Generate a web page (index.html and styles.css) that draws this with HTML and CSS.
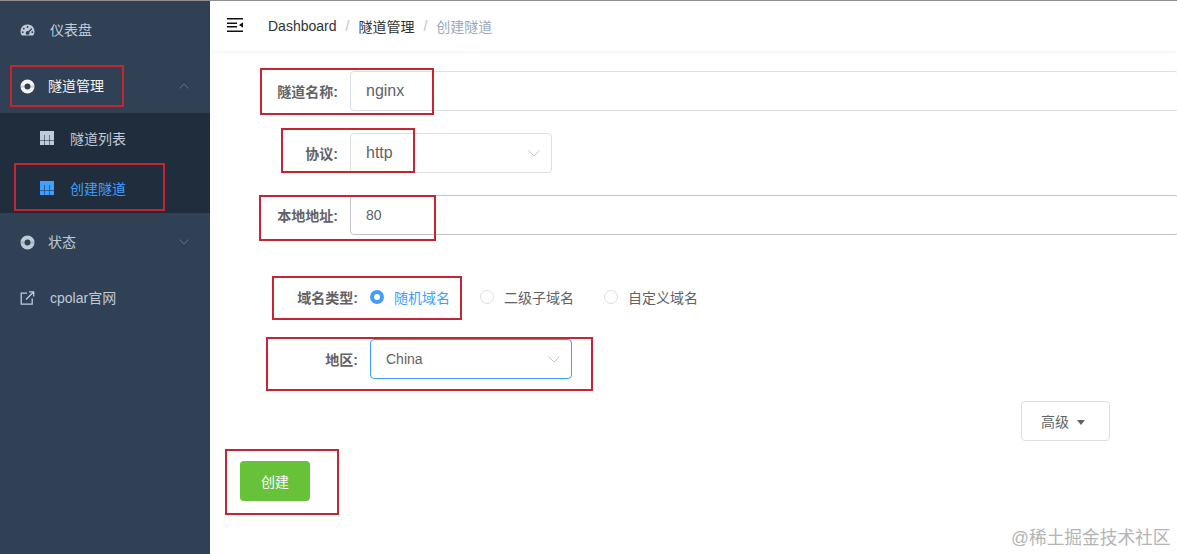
FILE: index.html
```html
<!DOCTYPE html>
<html lang="zh-CN">
<head>
<meta charset="utf-8">
<title>创建隧道</title>
<link rel="stylesheet" href="styles.css">
</head>
<body>
<div class="page">
  <aside class="sidebar">
    <a class="menu-item">
      <svg class="icon icon-gauge" viewBox="0 0 16 14"><path fill="currentColor" fill-rule="evenodd" d="M8 .5a7.500 7.500 0 0 1 6.600 11.100c-.3.600-.8.900-1.400.900H2.800c-.6 0-1.100-.3-1.400-.9A7.500 7.500 0 0 1 8 .5zM8 2.200a1 1 0 1 0 0 2 1 1 0 0 0 0-2zM4 4a1 1 0 1 0 0 2 1 1 0 0 0 0-2zm8.200.3L8.900 7.700a2 2 0 1 0 1.100 1.100l3.200-3.500zM2.800 7.800a1 1 0 1 0 0 2 1 1 0 0 0 0-2zm10.400 0a1 1 0 1 0 0 2 1 1 0 0 0 0-2z"/></svg>
      <span class="menu-text">仪表盘</span>
    </a>
    <a class="menu-item menu-item-open">
      <svg class="icon icon-ring" viewBox="0 0 16 16"><path fill="currentColor" fill-rule="evenodd" d="M8 .5a7.500 7.500 0 1 1 0 15 7.500 7.500 0 0 1 0-15zM8 4.800a3.200 3.200 0 1 0 0 6.400 3.200 3.200 0 0 0 0-6.400z"/><path fill="#304156" opacity=".18" d="M0 6.800h5v2.400H0zM11 6.800h5v2.400h-5z"/></svg>
      <span class="menu-text">隧道管理</span>
      <svg class="chevron" viewBox="0 0 10 6"><path d="M.5 5.500 5 1l4.500 4.500" fill="none" stroke="currentColor"/></svg>
    </a>
    <div class="submenu">
      <a class="sub-item">
        <svg class="grid" viewBox="0 0 14 14"><path fill="currentColor" d="M0 0h14v14H0z"/><path class="grid-lines" d="M0 9.500h14M4.500 4v10M9.500 4v10"/></svg>
        <span>隧道列表</span>
      </a>
      <a class="sub-item sub-item-active">
        <svg class="grid" viewBox="0 0 14 14"><path fill="currentColor" d="M0 0h14v14H0z"/><path class="grid-lines" d="M0 9.500h14M4.500 4v10M9.500 4v10"/></svg>
        <span>创建隧道</span>
      </a>
    </div>
    <a class="menu-item menu-item-status">
      <svg class="icon icon-ring" viewBox="0 0 16 16"><path fill="currentColor" fill-rule="evenodd" d="M8 .5a7.500 7.500 0 1 1 0 15 7.500 7.500 0 0 1 0-15zM8 4.800a3.200 3.200 0 1 0 0 6.400 3.200 3.200 0 0 0 0-6.400z"/><path fill="#304156" opacity=".18" d="M0 6.800h5v2.400H0zM11 6.800h5v2.400h-5z"/></svg>
      <span class="menu-text">状态</span>
      <svg class="chevron" viewBox="0 0 10 6"><path d="M.5.500 5 5 9.500.5" fill="none" stroke="currentColor"/></svg>
    </a>
    <a class="menu-item">
      <svg class="icon icon-link" viewBox="0 0 14 14"><path fill="none" stroke="currentColor" stroke-width="1.300" d="M6.500 2.200H.7v11h11V7.500M5.500 8.500 13 1M8.500.8h4.700v4.700"/></svg>
      <span class="menu-text">cpolar官网</span>
    </a>
  </aside>

  <div class="content">
    <header class="navbar">
      <svg class="hamburger" viewBox="0 0 16 14"><path fill="#111" d="M0 0h16v1.500H0zM0 4.500h10V6H0zM0 8h10v1.500H0zM0 12.500h16V14H0zM16 4.200v5.600L12 7z"/></svg>
      <nav class="crumbs">
        <span class="crumb">Dashboard</span><span class="sep">/</span><span class="crumb">隧道管理</span><span class="sep">/</span><span class="crumb crumb-current">创建隧道</span>
      </nav>
    </header>

    <main class="form">
      <div class="row">
        <label class="label">隧道名称:</label>
        <input class="input input-large" value="nginx">
      </div>
      <div class="row">
        <label class="label">协议:</label>
        <div class="select select-large"><span>http</span><svg class="caret" viewBox="0 0 12 7"><path d="M.5.500 6 6 11.500.5" fill="none" stroke="currentColor"/></svg></div>
      </div>
      <div class="row">
        <label class="label">本地地址:</label>
        <input class="input input-dark" value="80">
      </div>
      <div class="row row-radio">
        <label class="label label-wide">域名类型:</label>
        <div class="radios">
          <span class="radio radio-on"><i class="dot"></i>随机域名</span>
          <span class="radio"><i class="dot"></i>二级子域名</span>
          <span class="radio"><i class="dot"></i>自定义域名</span>
        </div>
      </div>
      <div class="row">
        <label class="label label-wide">地区:</label>
        <div class="select select-focus"><span>China</span><svg class="caret" viewBox="0 0 12 7"><path d="M.5.500 6 6 11.500.5" fill="none" stroke="currentColor"/></svg></div>
      </div>
      <div class="row-advanced">
        <button class="btn-advanced">高级<i class="tri"></i></button>
      </div>
      <button class="btn-create">创建</button>
    </main>
  </div>

  <div class="mark mark-a"></div>
  <div class="mark mark-b"></div>
  <div class="mark mark-c"></div>
  <div class="mark mark-d"></div>
  <div class="mark mark-e"></div>
  <div class="mark mark-f"></div>
  <div class="mark mark-g"></div>
  <div class="mark mark-h"></div>
  <div class="watermark">@稀土掘金技术社区</div>
</div>
</body>
</html>
```

FILE: styles.css
```css
* { box-sizing: border-box; }
html, body { margin: 0; height: 100%; overflow: hidden; background: #fff; }
body, input, button {
  font-family: "Liberation Sans", "Noto Sans CJK SC", sans-serif;
}
.page {
  position: relative;
  display: flex;
  width: 1177px;
  height: 554px;
  overflow: hidden;
  border-top: 1px solid #8f8f8f;
}
.sidebar {
  flex: 0 0 210px;
  padding-top: 1px;
  background: #304156;
  color: #bfcbd9;
  font-size: 14px;
}
.menu-item {
  display: flex;
  align-items: center;
  height: 56px;
  padding-left: 20px;
  position: relative;
}
.menu-item-open { color: #f4f6f8; }
.icon { flex: none; width: 15px; height: 15px; margin-right: 15px; }
.icon-ring { margin-right: 13px; }
.icon-gauge { height: 13px; }
.icon-link { height: 14px; }
.menu-text { line-height: 20px; }
.chevron {
  position: absolute;
  right: 21px;
  top: 25px;
  width: 10px;
  height: 6px;
  color: #5f7083;
}
.submenu { background: #1f2d3d; height: 100px; margin-top: -1px; margin-bottom: 1px; }
.sub-item {
  display: flex;
  align-items: center;
  height: 50px;
  padding-left: 40px;
}
.sub-item-active { color: #409eff; }
.grid { flex: none; width: 14px; height: 14px; margin-right: 16px; }
.grid-lines { fill: none; stroke: #1f2d3d; stroke-width: 1; opacity: .55; }
.content { flex: 1; min-width: 0; }
.navbar {
  display: flex;
  align-items: center;
  height: 50px;
  padding-left: 17px;
  box-shadow: 0 1px 4px rgba(0, 21, 41, .06);
}
.hamburger { width: 16px; height: 14px; margin-right: 25px; margin-top: -3px; }
.crumbs { font-size: 14px; color: #303133; display: flex; align-items: center; }
.sep { color: #c0c4cc; margin: 0 9px; }
.crumb-current { color: #97a8be; }
.form { padding: 20px 0 0 30px; }
.row { display: flex; align-items: center; height: 40px; margin-bottom: 22px; margin-right: -2px; }
.row-radio { margin-top: 42px; }
.label {
  flex: 0 0 100px;
  margin-left: 10px;
  padding-right: 12px;
  text-align: right;
  color: #606266;
  font-size: 14px;
  font-weight: 700;
}
.form .label-wide { flex-basis: 120px; }
.input {
  flex: 1;
  min-width: 0;
  height: 40px;
  padding: 0 15px;
  border: 1px solid #dcdfe6;
  border-radius: 4px;
  color: #606266;
  font-size: 14px;
  outline: none;
}
.input-large { font-size: 16px; }
.input-dark { border-color: #c0c4cc; }
.select {
  position: relative;
  display: flex;
  align-items: center;
  width: 202px;
  height: 40px;
  padding: 0 15px;
  border: 1px solid #dcdfe6;
  border-radius: 4px;
  color: #606266;
  font-size: 14px;
}
.select-large { font-size: 16px; }
.select-focus { border-color: #409eff; }
.caret { position: absolute; right: 11px; top: 16px; width: 12px; height: 7px; color: #c0c4cc; }
.radios { display: flex; font-size: 14px; color: #606266; }
.radio { display: flex; align-items: center; margin-right: 30px; }
.dot {
  width: 14px;
  height: 14px;
  margin-right: 10px;
  border: 1px solid #dcdfe6;
  border-radius: 50%;
  background: #fff;
}
.radio-on { color: #409eff; }
.radio-on .dot { border: 4px solid #409eff; }
.row-advanced { display: flex; justify-content: flex-end; padding-right: 67px; margin-bottom: 20px; }
.btn-advanced {
  display: flex;
  align-items: center;
  justify-content: center;
  width: 89px;
  height: 40px;
  background: #fff;
  border: 1px solid #dcdfe6;
  border-radius: 4px;
  color: #606266;
  font-size: 14px;
}
.tri {
  width: 0;
  height: 0;
  margin-left: 8px;
  margin-right: 5px;
  margin-top: 2px;
  border: 4px solid transparent;
  border-top: 5px solid #606266;
  border-bottom: 0;
}
.btn-create {
  display: block;
  width: 70px;
  height: 40px;
  background: #67c23a;
  border: 0;
  border-radius: 4px;
  color: #fff;
  font-size: 14px;
}
.mark { position: absolute; border: 2px solid #c5252f; pointer-events: none; }
.mark-a { left: 10px; top: 64px; width: 114px; height: 42px; }
.mark-b { left: 14px; top: 162px; width: 151px; height: 48px; }
.mark-c { left: 260px; top: 67px; width: 174px; height: 47px; }
.mark-d { left: 281px; top: 127px; width: 134px; height: 45px; }
.mark-e { left: 259px; top: 194px; width: 177px; height: 46px; }
.mark-f { left: 272px; top: 275px; width: 190px; height: 44px; }
.mark-g { left: 266px; top: 336px; width: 327px; height: 54px; }
.mark-h { left: 225px; top: 448px; width: 114px; height: 66px; }
.watermark {
  position: absolute;
  left: 1011px;
  top: 524px;
  color: #b4b4b4;
  font-size: 17.7px;
  line-height: 26px;
  white-space: nowrap;
}
```
